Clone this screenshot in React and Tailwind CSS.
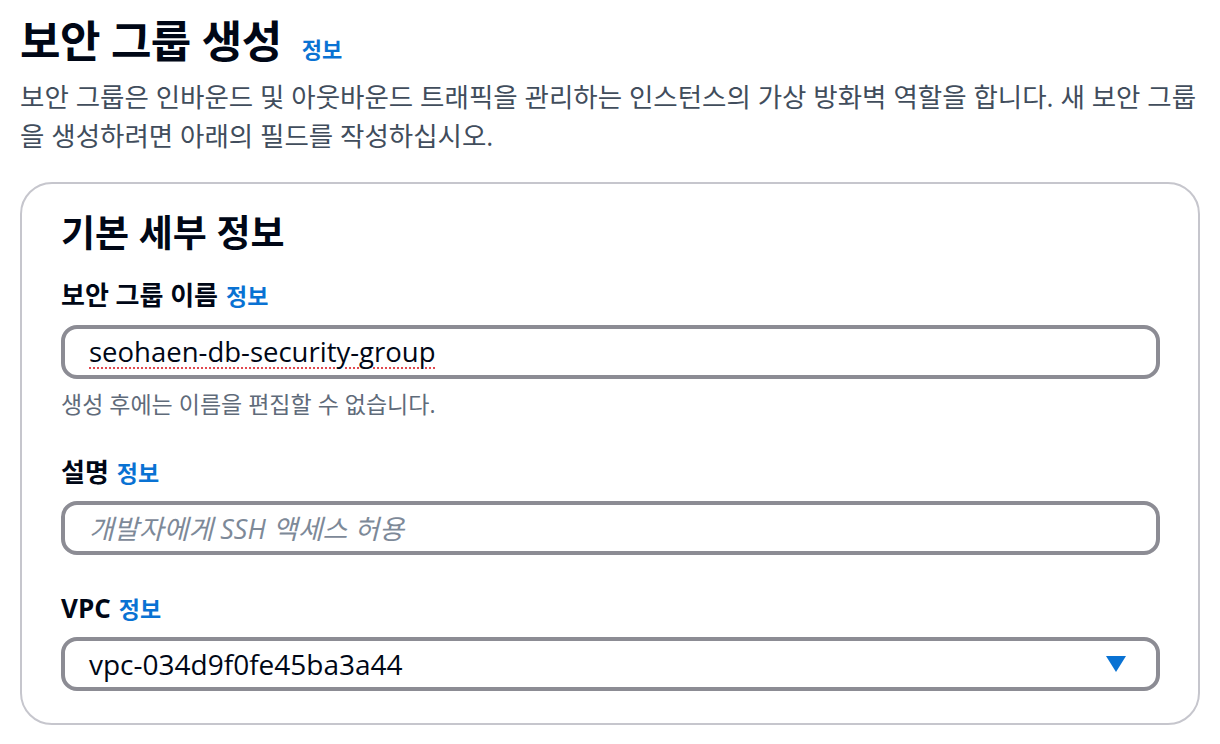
export default function App() {
  const font = { fontFamily: '"Open Sans", "Noto Sans CJK KR", sans-serif' };

  return (
    <div className="min-h-screen bg-white px-5 text-[#000716]" style={font}>
      {/* 페이지 제목 */}
      <div className="mt-[15px] flex h-[52px] items-baseline gap-[20px]">
        <h1 className="text-[44px] font-bold leading-[52px] tracking-[-0.5px]">보안 그룹 생성</h1>
        <a className="text-[22px] font-bold text-[#0972d3]">정보</a>
      </div>
      <p className="mt-[11px] text-[26.5px] leading-[39px] text-[#414d5c]">
        보안 그룹은 인바운드 및 아웃바운드 트래픽을 관리하는 인스턴스의 가상 방화벽 역할을 합니다. 새 보안 그룹
        <br />을 생성하려면 아래의 필드를 작성하십시오.
      </p>

      {/* 기본 세부 정보 카드 */}
      <div className="mt-[26px] rounded-[32px] border-2 border-[#c6c6cd] pl-[39px] pr-[38px] pt-[27px] pb-[32px]">
        <h2 className="h-[44px] text-[37px] font-bold leading-[44px]">기본 세부 정보</h2>

        <div className="mt-[24px] flex h-[32px] items-baseline gap-[8px] leading-[32px]">
          <span className="text-[26px] font-bold">보안 그룹 이름</span>
          <a className="text-[23px] font-bold text-[#0972d3]">정보</a>
        </div>
        <div className="mt-[14px] flex h-[54px] items-center rounded-[16px] border-4 border-[#8c8c94] px-6 text-[27.5px]">
          <span className="underline decoration-[#e0484f] decoration-dotted decoration-2 underline-offset-[5px]">
            seohaen-db-security-group
          </span>
        </div>
        <p className="mt-[11px] h-[28px] text-[23px] leading-[28px] text-[#5f6b7a]">생성 후에는 이름을 편집할 수 없습니다.</p>

        <div className="mt-[38px] flex h-[32px] items-baseline gap-[8px] leading-[32px]">
          <span className="text-[26px] font-bold">설명</span>
          <a className="text-[23px] font-bold text-[#0972d3]">정보</a>
        </div>
        <input
          className="mt-[13px] block h-[54px] w-full rounded-[16px] border-4 border-[#8c8c94] px-6 text-[27px] outline-none placeholder:italic placeholder:text-[#7d8998]"
          placeholder="개발자에게 SSH 액세스 허용"
          style={font}
        />

        <div className="mt-[37px] flex h-[32px] items-baseline gap-[8px] leading-[32px]">
          <span className="text-[26px] font-bold">VPC</span>
          <a className="text-[23px] font-bold text-[#0972d3]">정보</a>
        </div>
        <div className="mt-[13px] flex h-[54px] items-center justify-between rounded-[16px] border-4 border-[#8c8c94] pl-6 pr-[30px] text-[28px]">
          <span>vpc-034d9f0fe45ba3a44</span>
          <svg width="20" height="16" viewBox="0 0 20 16">
            <path d="M0 0h20L10 16z" fill="#0972d3" />
          </svg>
        </div>
      </div>
    </div>
  );
}
